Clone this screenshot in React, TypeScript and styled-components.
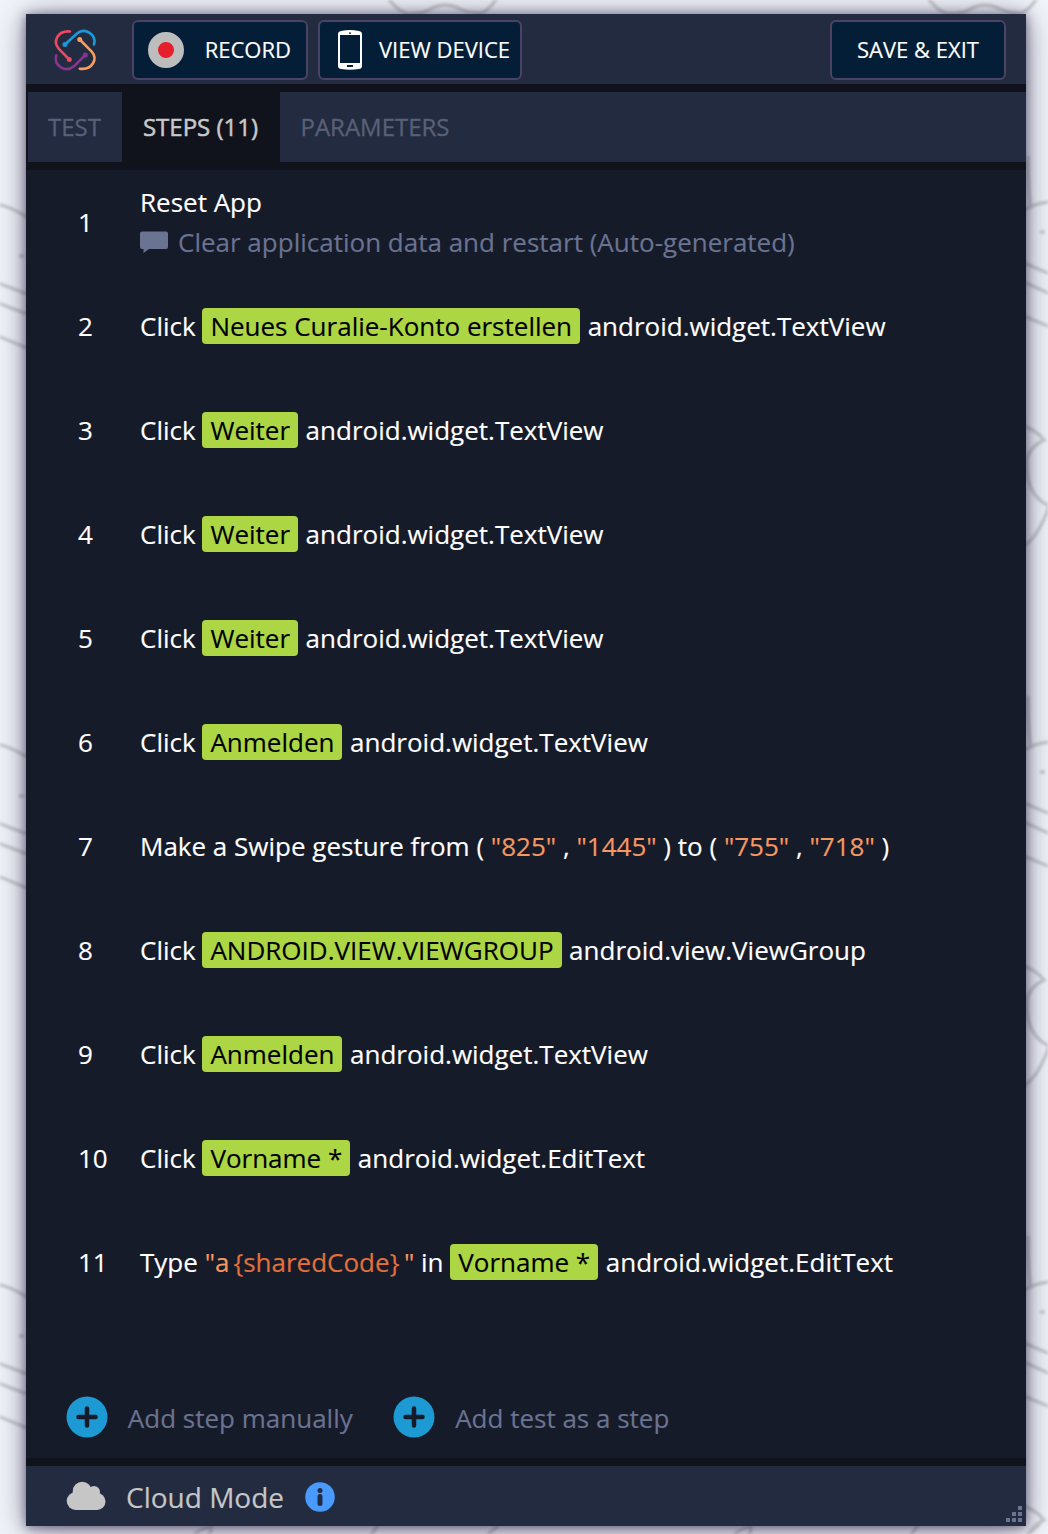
import React from "react";
import styled, { createGlobalStyle } from "styled-components";

const GlobalStyle = createGlobalStyle`
  *, *::before, *::after { box-sizing: border-box; }
  body { margin: 0; background: #f2f6fb; font-family: "Open Sans", "Noto Sans", sans-serif; }
  button { font: inherit; cursor: pointer; }
`;

const Page = styled.div`
  position: relative;
  height: 1534px;
  padding: 14px 22px 8px 26px;
  overflow: hidden;
`;

const Backdrop = styled.svg`
  position: absolute;
  inset: 0;
  width: 1048px;
  height: 1534px;
  fill: none;
  stroke: #cbcdd0;
  stroke-width: 3.6;
  filter: blur(0.9px);
`;

const Window = styled.main`
  position: relative;
  height: 1512px;
  display: flex;
  flex-direction: column;
  gap: 8px;
  background: #10121c;
  box-shadow: 0 1px 10px rgba(50, 38, 72, 0.6), 0 3px 30px rgba(50, 38, 78, 0.55);
  -webkit-text-stroke: 0.15px currentColor;
`;

const Toolbar = styled.header`
  height: 70px;
  flex: none;
  display: flex;
  align-items: center;
  gap: 10px;
  padding: 2px 20px 0 24px;
  background: #232b40;
`;

const Logo = styled.svg`
  width: 50px;
  height: 50px;
  margin-right: 22px;
  fill: none;
  stroke-width: 2.6;
  stroke-linecap: round;
`;

const ToolButton = styled.button<{ $width: number; $push?: boolean; $center?: boolean }>`
  width: ${(p) => p.$width}px;
  height: 60px;
  margin: 0;
  margin-left: ${(p) => (p.$push ? "auto" : "0")};
  padding: 0 ${(p) => (p.$center ? 13 : 10)}px 0 ${(p) => (p.$center ? 13 : 14)}px;
  display: flex;
  align-items: center;
  justify-content: ${(p) => (p.$center ? "center" : "space-between")};
  color: #fff;
  background: #041e38;
  border: 2px solid #4b4363;
  border-radius: 6px;
  font-size: 22px;
  line-height: 30px;
  white-space: nowrap;
`;

const ButtonLabel = styled.span<{ $inset?: number }>`
  margin-right: ${(p) => p.$inset ?? 0}px;
  padding-bottom: 2px;
`;

const RecordDot = styled.span`
  width: 36px;
  height: 36px;
  border-radius: 50%;
  border: 10px solid #bdbdbd;
  background: #e71e2b;
`;

const PhoneIcon = styled.svg`
  width: 24px;
  height: 40px;
  margin-left: 4px;
`;

const Tabs = styled.nav`
  height: 70px;
  flex: none;
  display: flex;
  margin-left: 2px;
  background: #232b40;
`;

const Tab = styled.button<{ $active?: boolean; $width: number }>`
  width: ${(p) => p.$width}px;
  padding: 0 1px 2px 0;
  border: 0;
  font-size: 24px;
  color: ${(p) => (p.$active ? "#c8c8c8" : "#596076")};
  background: ${(p) => (p.$active ? "#10121c" : "transparent")};
  -webkit-text-stroke: ${(p) => (p.$active ? 0.5 : 0.3)}px currentColor;
  white-space: nowrap;
`;

const Body = styled.section`
  flex: 1;
  display: flex;
  flex-direction: column;
  justify-content: space-between;
  background: #161b29;
`;

const StepList = styled.ol`
  list-style: none;
  margin: 0;
  padding: 0;
  font-size: 26px;
  line-height: 36px;
  color: #fff;
`;

const StepRow = styled.li`
  height: 104px;
  display: flex;
  align-items: center;
  padding-left: 52px;
`;

const StepNumber = styled.span`
  width: 62px;
`;

const StepText = styled.div`
  white-space: nowrap;
`;

const Note = styled.div`
  display: flex;
  align-items: center;
  gap: 10px;
  margin-top: 4px;
  color: #6a7391;
`;

const NoteIcon = styled.svg`
  width: 28px;
  height: 22px;
`;

const Tag = styled.span`
  display: inline-block;
  height: 36px;
  margin-right: 0.8px;
  padding: 0 8px;
  color: #000;
  background: #add645;
  border-radius: 4px;
`;

const Value = styled.span`
  color: #f79761;
`;

const Param = styled.span`
  color: #e2703a;
  margin: 0 4.5px 0 4px;
`;

const Actions = styled.div`
  display: flex;
  gap: 40.6px;
  padding: 0 40px 20px;
`;

const AddButton = styled.button`
  display: flex;
  align-items: center;
  gap: 19.8px;
  padding: 0;
  border: 0;
  background: none;
  color: #6a7391;
  font-size: 26px;
  line-height: 42px;
`;

const AddLabel = styled.span`
  height: 42px;
  line-height: 44px;
`;

const AddIcon = styled.svg`
  width: 42px;
  height: 42px;
`;

const Footer = styled.footer`
  position: relative;
  height: 60px;
  flex: none;
  display: flex;
  align-items: center;
  padding: 2px 0 0 40px;
  color: #c6c6c6;
  background: #232b40;
  font-size: 28px;
`;

const CloudIcon = styled.svg`
  width: 40px;
  height: 32px;
  margin-right: 20px;
  fill: #c6c6c6;
`;

const InfoIcon = styled.svg`
  width: 30px;
  height: 30px;
  margin-left: 21px;
`;

const Grip = styled.svg`
  position: absolute;
  right: 4px;
  bottom: 4px;
  width: 16px;
  height: 16px;
`;

type Step = { note?: string; content: React.ReactNode };

const target = (label: string, kind: string) => (
  <>
    <Tag>{label}</Tag> {kind}
  </>
);

const steps: Step[] = [
  { content: "Reset App", note: "Clear application data and restart (Auto-generated)" },
  { content: <>Click {target("Neues Curalie-Konto erstellen", "android.widget.TextView")}</> },
  { content: <>Click {target("Weiter", "android.widget.TextView")}</> },
  { content: <>Click {target("Weiter", "android.widget.TextView")}</> },
  { content: <>Click {target("Weiter", "android.widget.TextView")}</> },
  { content: <>Click {target("Anmelden", "android.widget.TextView")}</> },
  {
    content: (
      <>
        Make a Swipe gesture from ( <Value>"825"</Value> , <Value>"1445"</Value> ) to ({" "}
        <Value>"755"</Value> , <Value>"718"</Value> )
      </>
    ),
  },
  { content: <>Click {target("ANDROID.VIEW.VIEWGROUP", "android.view.ViewGroup")}</> },
  { content: <>Click {target("Anmelden", "android.widget.TextView")}</> },
  { content: <>Click {target("Vorname *", "android.widget.EditText")}</> },
  {
    content: (
      <>
        Type{" "}
        <Value>
          "a<Param>{"{sharedCode}"}</Param>"
        </Value>{" "}
        in {target("Vorname *", "android.widget.EditText")}
      </>
    ),
  },
];

function Doodles() {
  const rows = [0, 540, 1080];
  return (
    <Backdrop viewBox="0 0 1048 1534" aria-hidden>
      {rows.map((y) => (
        <g key={y} transform={`translate(0 ${y})`}>
          <path d="M-2 204Q13 208 27 217M-2 283L27 294M-2 303L27 314M-2 336L27 348M19 256h5" />
          <path d="M1028 156Q1028 190 1031 209M1024 210Q1036 203 1050 202M1040 232h5M1024 263L1050 274M1024 282L1050 294M1024 316L1050 327" />
          <path d="M1024 426Q1037 431 1044 440Q1031 446 1027 458Q1024 494 1049 506Q1039 536 1024 546" />
        </g>
      ))}
      {[0, 540].map((x) => (
        <g key={x} transform={`translate(${x} 0)`}>
          <path d="M388 -2Q396 10 408 14Q424 14 432 8Q445 2 458 8Q470 14 482 13Q490 9 497 -2" />
          <path d="M193 1536Q200 1528 211 1527Q212 1531 208 1536M370 1536L379 1524M486 1536L500 1524" />
        </g>
      ))}
    </Backdrop>
  );
}

function BrandLogo() {
  return (
    <Logo viewBox="0 0 50 50" aria-label="Logo">
      <g stroke="#ec4861">
        <path d="M19.3 34.5L8.7 23.7C2.5 16.500 7.500 5.500 20 6.500" />
        <circle cx="19.3" cy="34.500" r="1.200" />
      </g>
      <g stroke="#1d9ad6">
        <path d="M15 19.500L27 8.500C35 2 47 9.500 44 19.500" />
        <circle cx="15" cy="19.500" r="1.200" />
      </g>
      <g stroke="#f99d5c">
        <path d="M29.700 14.500L41.500 26.300C48.500 34 42 45.500 29.800 43.700" />
        <circle cx="29.700" cy="14.500" r="1.200" />
      </g>
      <g stroke="#883590">
        <path d="M35.300 30L24 41.300C15.500 48 3.500 41 6.200 30.300" />
        <circle cx="35.300" cy="30" r="1.200" />
      </g>
    </Logo>
  );
}

function AddAction({ label }: { label: string }) {
  return (
    <AddButton>
      <AddIcon viewBox="0 0 42 42">
        <circle cx="21" cy="21" r="20.500" fill="#1d9ad3" />
        <path d="M21 12.500v17M12.500 21h17" stroke="#161b29" strokeWidth="4.500" strokeLinecap="round" />
      </AddIcon>
      <AddLabel>{label}</AddLabel>
    </AddButton>
  );
}

export default function App() {
  return (
    <Page>
      <GlobalStyle />
      <Doodles />
      <Window>
        <Toolbar>
          <BrandLogo />
          <ToolButton $width={176}>
            <RecordDot />
            <ButtonLabel $inset={5}>RECORD</ButtonLabel>
          </ToolButton>
          <ToolButton $width={204}>
            <PhoneIcon viewBox="0 0 24 40">
              <path
                fill="#fff"
                fillRule="evenodd"
                d="M3 1Q12-.8 21 1Q24 1.500 24 4V36Q24 38.500 21 39Q12 40.500 3 39Q0 38.500 0 36V4Q0 1.500 3 1ZM2 5V33H22V5ZM9 35V37H15V35ZM11.300 2.300V4H12.700V2.300Z"
              />
            </PhoneIcon>
            <ButtonLabel>VIEW DEVICE</ButtonLabel>
          </ToolButton>
          <ToolButton $width={176} $push $center>
            <ButtonLabel>SAVE &amp; EXIT</ButtonLabel>
          </ToolButton>
        </Toolbar>
        <Tabs>
          <Tab $width={94}>TEST</Tab>
          <Tab $width={158} $active>
            STEPS (11)
          </Tab>
          <Tab $width={191}>PARAMETERS</Tab>
        </Tabs>
        <Body>
          <StepList>
            {steps.map((step, i) => (
              <StepRow key={i}>
                <StepNumber>{i + 1}</StepNumber>
                <StepText>
                  {step.content}
                  {step.note && (
                    <Note>
                      <NoteIcon viewBox="0 0 28 22">
                        <path
                          fill="#6a7391"
                          d="M2 .5H26Q28 .5 28 2.500V16Q28 18 26 18H9L3.500 22V18H2Q0 18 0 16V2.500Q0 .5 2 .5Z"
                        />
                      </NoteIcon>
                      {step.note}
                    </Note>
                  )}
                </StepText>
              </StepRow>
            ))}
          </StepList>
          <Actions>
            <AddAction label="Add step manually" />
            <AddAction label="Add test as a step" />
          </Actions>
        </Body>
        <Footer>
          <CloudIcon viewBox="0 0 40 32">
            <circle cx="16.200" cy="10.300" r="9.500" />
            <circle cx="28" cy="11" r="6" />
            <circle cx="9.700" cy="20" r="9" />
            <circle cx="31" cy="20.500" r="8.500" />
            <path d="M9.700 11H29V12H31V29H9.700Z" />
          </CloudIcon>
          Cloud Mode
          <InfoIcon viewBox="0 0 30 30">
            <circle cx="15" cy="15" r="14.800" fill="#489bfc" />
            <circle cx="15" cy="8.500" r="2.500" fill="#232b40" />
            <path d="M15 14.500v7" stroke="#232b40" strokeWidth="5" strokeLinecap="round" />
          </InfoIcon>
          <Grip viewBox="0 0 16 16" fill="#6a7391">
            <path d="M12 0h4v4h-4zM6 6h4v4H6zM12 6h4v4h-4zM0 12h4v4H0zM6 12h4v4H6zM12 12h4v4h-4z" />
          </Grip>
        </Footer>
      </Window>
    </Page>
  );
}
